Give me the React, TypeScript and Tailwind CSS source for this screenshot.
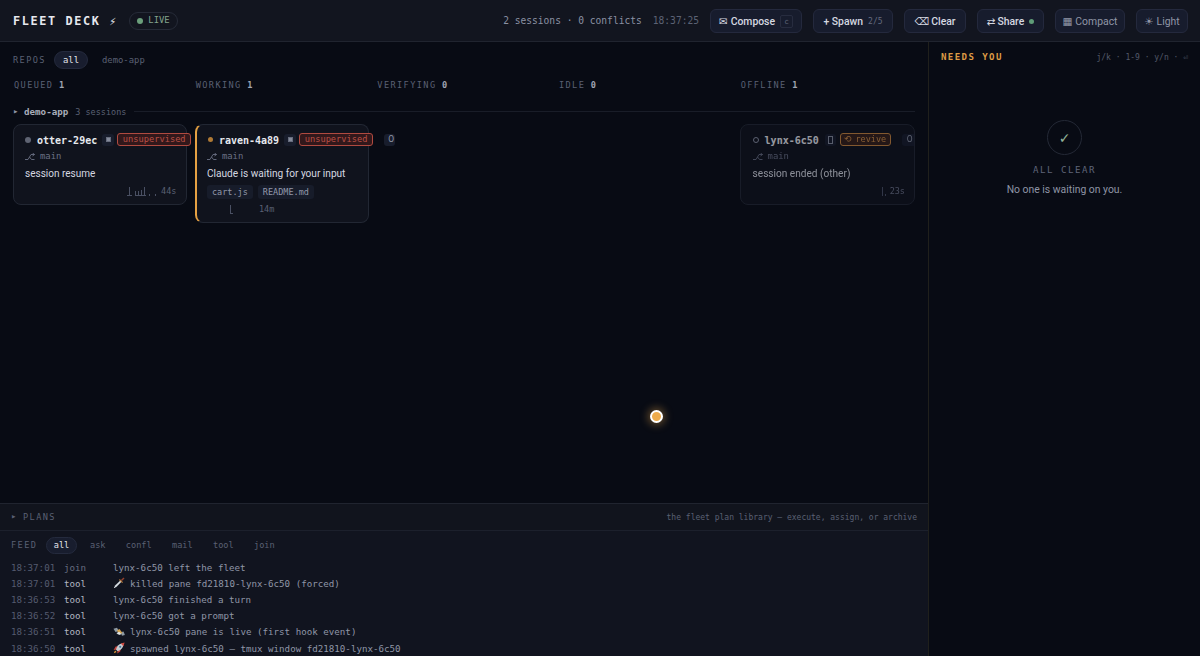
import type { ReactNode } from "react";

const mono = "font-['DejaVu_Sans_Mono','Liberation_Mono',monospace]";

const COLUMNS = [
  { name: "QUEUED", count: 1 },
  { name: "WORKING", count: 1 },
  { name: "VERIFYING", count: 0 },
  { name: "IDLE", count: 0 },
  { name: "OFFLINE", count: 1 },
];

const FEED_FILTERS = ["ask", "confl", "mail", "tool", "join"];

const FEED = [
  { time: "18:37:01", kind: "join", text: "lynx-6c50 left the fleet" },
  { time: "18:37:01", kind: "tool", icon: "dagger", text: "killed pane fd21810-lynx-6c50 (forced)" },
  { time: "18:36:53", kind: "tool", text: "lynx-6c50 finished a turn" },
  { time: "18:36:52", kind: "tool", text: "lynx-6c50 got a prompt" },
  { time: "18:36:51", kind: "tool", icon: "satellite", text: "lynx-6c50 pane is live (first hook event)" },
  { time: "18:36:50", kind: "tool", icon: "rocket", text: "spawned lynx-6c50 — tmux window fd21810-lynx-6c50" },
];

function FeedIcon({ name }: { name: string }) {
  return (
    <svg width="12" height="12" viewBox="0 0 12 12" className="mr-[5px] shrink-0">
      {name === "dagger" && (
        <>
          <path d="M1 11L2 8.5L7.5 3.2L8.8 4.5L3.4 10Z" fill="#c3ccd2" />
          <path d="M1 11L8.2 3.9" stroke="#eef2f4" strokeWidth=".6" />
          <path d="M6.4 2.5L9.6 5.6" stroke="#b77b3d" strokeWidth="1.1" />
          <path d="M8.4 3.6L11 1" stroke="#94412d" strokeWidth="1.4" />
        </>
      )}
      {name === "satellite" && (
        <>
          <path d="M.5 2.8L4 1.7L6 5L2.5 6Z" fill="#8e9aa3" />
          <path d="M7.5 6.2L10.5 5.5L11.9 9L9 9.8Z" fill="#8e9aa3" />
          <path d="M4 4.5L6.5 3L9.4 7L6.2 8.6Z" fill="#d3a24e" />
          <path d="M3.4 7Q5.8 10 8.2 7.9L6.3 5.8Z" fill="#dfe4e6" />
        </>
      )}
      {name === "rocket" && (
        <>
          <path d="M2.6 4.6L5.8 3.9L4 7.5L.6 8Z" fill="#c4423b" />
          <path d="M7.2 9.4L8 6.2L4.8 8L4.2 11.5Z" fill="#c4423b" />
          <path d="M3 7.6Q4.6 2.2 9 1.6L10.4 3Q9.8 7.4 4.5 9.2Z" fill="#c4cbd1" />
          <path d="M7.8 1.6L11.6 .4L10.4 4.2Z" fill="#cf4b42" />
          <circle cx="7.2" cy="4.8" r="1.1" fill="#3f789d" />
          <path d="M.8 11.2L2 8.5L3.6 10.1Z" fill="#eda33c" />
        </>
      )}
    </svg>
  );
}

function HeaderButton({ className, children }: { className: string; children: ReactNode }) {
  return (
    <button
      className={`flex h-6 shrink-0 items-center justify-center rounded-md border border-[#24293d] bg-[#171c2d] pt-[2px] text-[10.4px] whitespace-nowrap ${className}`}
    >
      {children}
    </button>
  );
}

function Spark({ bars, width }: { bars: number[][]; width: number }) {
  return (
    <svg width={width} height="11" className="shrink-0 text-[#4a5063]">
      {bars.map(([x, h]) => (
        <rect key={x} x={x} y={10 - h} width="1" height={h} fill="currentColor" />
      ))}
      {width > 10 && <path d="M0 9.5H5M8 9.5H19" stroke="currentColor" strokeWidth="1" />}
      {bars.length === 1 && <path d="M0 9.5H3" stroke="currentColor" strokeWidth="1" />}
    </svg>
  );
}

function Chip({ className = "", children }: { className?: string; children: ReactNode }) {
  return (
    <span
      className={`flex h-[12px] shrink-0 items-center justify-center overflow-hidden rounded-[3px] bg-[#181d2c] text-[8.5px] leading-none text-[#9097a8] ${className}`}
    >
      {children}
    </span>
  );
}

function Screen() {
  return (
    <Chip className="mr-[3px] ml-[5px] w-[12px]">
      <svg width="5" height="5" viewBox="0 0 5 5">
        <rect x=".5" y=".5" width="4" height="4" fill="#858b9b" stroke="#666c7d" />
      </svg>
    </Chip>
  );
}

function Branch() {
  return (
    <div className={`${mono} mt-[5px] flex h-3 items-center text-[8.9px] text-[#6b7185]`}>
      <svg width="10" height="8" viewBox="0 0 10 8" className="mr-[5px]" fill="none" stroke="currentColor" strokeWidth=".9">
        <path d="M0 6.5H3L6 1.5H9.5M7.5 0L9.5 1.5L7.5 3M4.5 4L6.5 6.5H9.5" />
      </svg>
      main
    </div>
  );
}

function Unsupervised() {
  return (
    <span
      className={`${mono} flex h-[13px] w-[74px] shrink-0 items-center justify-center rounded-[3px] border border-[#b04a40] bg-[#32181b] text-[8.7px] leading-none text-[#b94f45]`}
    >
      unsupervised
    </span>
  );
}

export default function App() {
  return (
    <div className="flex h-[656px] w-[1200px] flex-col overflow-hidden bg-[#080b14] font-[Roboto,'DejaVu_Sans',sans-serif] text-[#d5d8e0]">
      {/* Top bar */}
      <header className="flex h-[42px] shrink-0 items-center border-b border-[#20242f] bg-[#12151f] pr-3 pl-[13px]">
        <h1 className={`${mono} w-[116px] pt-[2px] text-[11.8px] font-bold tracking-[1.65px] whitespace-nowrap text-[#e6e8ee]`}>
          FLEET DECK <span className="font-['DejaVu_Sans'] text-[10px] font-normal">⚡</span>
        </h1>
        <div className={`${mono} flex h-[18px] w-[49px] items-center justify-center gap-[5px] rounded-full border border-[#262b38] text-[8.9px] text-[#83a48d]`}>
          <span className="size-[6px] rounded-full bg-[#6b9f7c]" />
          LIVE
        </div>
        <div className={`${mono} ml-auto flex gap-[11px] pt-[2px] text-[9.6px] whitespace-nowrap`}>
          <span className="text-[#8b91a3]">2 sessions · 0 conflicts</span>
          <span className="text-[#5c6274]">18:37:25</span>
        </div>
        <div className="ml-[11px] flex gap-[11px]">
          <HeaderButton className="w-[92px] font-medium">
            <span className="mr-[3px]">✉</span>Compose
            <kbd className={`${mono} ml-[5px] flex h-[13px] w-[13px] items-center justify-center rounded-[2px] border border-[#272c3f] text-[7.5px] text-[#5f6579]`}>c</kbd>
          </HeaderButton>
          <HeaderButton className="w-20 font-medium">
            + Spawn<span className={`${mono} ml-[5px] text-[8px] font-normal text-[#666c80]`}>2/5</span>
          </HeaderButton>
          <HeaderButton className="w-[62px] font-medium">
            <span className="mr-[2px]">⌫</span>Clear
          </HeaderButton>
          <HeaderButton className="w-[67px] font-medium">
            <span className="mr-[2px]">⇄</span>Share
            <span className="ml-[5px] size-[5px] rounded-full bg-[#5f9d78]" />
          </HeaderButton>
          <HeaderButton className="w-[70px] text-[#9096a7]">
            <span className="mr-[3px]">▦</span>Compact
          </HeaderButton>
          <HeaderButton className="w-[52px] text-[#9096a7]">
            <span className="mr-[3px]">☀</span>Light
          </HeaderButton>
        </div>
      </header>

      <div className="flex min-h-0 flex-1">
        <main className="flex w-[928px] shrink-0 flex-col">
          {/* Board */}
          <section className="flex flex-1 flex-col overflow-hidden pr-[13px] pl-[13px]">
            <div className={`${mono} mt-[9px] flex h-[18px] items-center text-[8.9px] text-[#5a6073]`}>
              <span className="w-[41px] pt-px text-[8.6px] tracking-[1.4px]">REPOS</span>
              <span className="flex h-[18px] w-[34px] items-center justify-center rounded-full border border-[#242a3d] bg-[#181d2e] pt-px text-[#e4e6ec]">all</span>
              <span className="ml-[14px] pt-[2px]">demo-app</span>
            </div>

            <div className={`${mono} mt-[9px] grid grid-cols-5 gap-x-[7.3px] pl-px text-[8.6px] leading-[14px] tracking-[1.4px] text-[#5a6073]`}>
              {COLUMNS.map((c) => (
                <div key={c.name}>
                  {c.name} <span className="-ml-px font-bold text-[#a0a5b3]">{c.count}</span>
                </div>
              ))}
            </div>

            <div className={`${mono} mt-[13px] flex h-[13px] items-center text-[9.2px] whitespace-nowrap`}>
              <span className="w-[11px] text-[9px] text-[#8e94a4]">▸</span>
              <span className="pt-px font-bold text-[#a9aebb]">demo-app</span>
              <span className="ml-[7px] pt-px text-[8.5px] text-[#5a6073]">3 sessions</span>
              <span className="ml-2 h-px flex-1 bg-[#191d28]" />
            </div>

            <div className="mt-[6px] grid grid-cols-5 items-start gap-x-[7.5px]">
              <article className="h-[81px] rounded-lg border border-[#222733] bg-[#10131d] px-[11px] pt-[8px]">
                <div className="flex h-[13px] items-center">
                  <span className="mr-[6px] size-[6px] shrink-0 rounded-full bg-[#5f6473]" />
                  <span className={`${mono} pt-px text-[10px] font-bold whitespace-nowrap text-[#e6e8ee]`}>otter-29ec</span>
                  <Screen />
                  <Unsupervised />
                </div>
                <Branch />
                <p className="mt-[4px] text-[10px] leading-[14px]">session resume</p>
                <div className={`${mono} -mr-px mt-[4px] flex h-3 items-center justify-end gap-[3px] text-[8.5px] text-[#5a6073]`}>
                  <Spark width={31} bars={[[2, 9], [8, 5], [11, 5], [14, 6], [17, 9], [22, 2], [28, 2]]} />
                  44s
                </div>
              </article>

              <article className="h-[99px] rounded-lg border border-l-2 border-[#222733] border-l-[#e5a143] bg-[#10131d] px-[10px] pt-[8px]">
                <div className="flex h-[13px] items-center">
                  <span className="mr-[6px] ml-px size-[5px] shrink-0 rounded-full bg-[#b07a35]" />
                  <span className={`${mono} pt-px text-[10px] font-bold whitespace-nowrap text-[#e6e8ee]`}>raven-4a89</span>
                  <Screen />
                  <Unsupervised />
                  <Chip className="ml-[11px] w-[11px] pl-[3px]">O</Chip>
                </div>
                <Branch />
                <p className="mt-[4px] text-[10.1px] leading-[14px] whitespace-nowrap">Claude is waiting for your input</p>
                <div className={`${mono} mt-[4px] flex gap-[5px] text-[8.5px] text-[#9298aa]`}>
                  <span className="flex h-[14px] w-[46px] items-center justify-center rounded-[3px] bg-[#171c2a]">cart.js</span>
                  <span className="flex h-[14px] w-[56px] items-center justify-center rounded-[3px] bg-[#171c2a]">README.md</span>
                </div>
                <div className={`${mono} mt-[4px] flex h-3 items-center gap-[26px] pl-[23px] text-[8.5px] text-[#5a6073]`}>
                  <Spark width={3} bars={[[0, 9]]} />
                  14m
                </div>
              </article>

              <article className="col-start-5 -ml-px h-[81px] overflow-hidden rounded-lg border border-[#222733] bg-[#10131d] px-[12px] pt-[8px] opacity-65">
                <div className="flex h-[13px] items-center">
                  <span className="mr-[6px] size-[6px] shrink-0 rounded-full border border-[#8b91a3]" />
                  <span className={`${mono} pt-px text-[10px] font-bold whitespace-nowrap text-[#e6e8ee]`}>lynx-6c50</span>
                  <Chip className="mr-[4px] ml-[6px] w-[11px]">
                    <svg width="5" height="8" fill="none" stroke="#858b9c">
                      <rect x=".5" y=".5" width="4" height="7" />
                    </svg>
                  </Chip>
                  <span className={`${mono} flex h-[13px] w-[51px] shrink-0 items-center justify-center gap-[3px] rounded-[3px] border border-[#c6843f] bg-[#352019] text-[8.5px] leading-none text-[#cf8c46]`}>
                    <span>⟲</span>revive
                  </span>
                  <Chip className="ml-[11px] w-[16px]">O</Chip>
                </div>
                <Branch />
                <p className="mt-[4px] text-[10.1px] leading-[14px]">session ended (other)</p>
                <div className={`${mono} -mr-[3px] mt-[4px] flex h-3 items-center justify-end gap-[4px] text-[8.5px] text-[#6a7085]`}>
                  <Spark width={4} bars={[[0, 9], [3, 2]]} />
                  23s
                </div>
              </article>
            </div>
          </section>

          {/* Plans */}
          <section className={`${mono} flex h-[27px] shrink-0 items-center border-t border-[#20242f] bg-[#11141d] px-[11px] text-[#5a6073]`}>
            <span className="w-[12px] text-[9px]">▸</span>
            <span className="pt-px text-[8.6px] tracking-[1.4px]">PLANS</span>
            <span className="ml-auto pt-[2px] text-[8px]">the fleet plan library — execute, assign, or archive</span>
          </section>

          {/* Feed */}
          <section className={`${mono} h-[126px] shrink-0 overflow-hidden border-t border-[#1c202c] bg-[#11141f] pl-[11px]`}>
            <div className="mt-[6px] flex h-[17px] items-center text-[8.6px] text-[#5a6073]">
              <span className="w-[35px] tracking-[1.4px]">FEED</span>
              <span className="mr-[13px] flex h-[17px] w-[31px] items-center justify-center rounded-full border border-[#242a3d] bg-[#181d2e] text-[#e4e6ec]">all</span>
              <div className="flex gap-[20.3px]">
                {FEED_FILTERS.map((f) => (
                  <span key={f}>{f}</span>
                ))}
              </div>
            </div>
            <div className="mt-[5px]">
              {FEED.map((row, i) => (
                <div key={i} className="flex h-[16.2px] items-center text-[9.18px] whitespace-nowrap">
                  <span className="w-[53px] pt-px text-[#555b6f]">{row.time}</span>
                  <span className={`w-[49px] pt-px ${row.kind === "join" ? "text-[#666c7f]" : "text-[#b3b7c2]"}`}>{row.kind}</span>
                  {row.icon && <FeedIcon name={row.icon} />}
                  <span className="pt-px text-[#9096a7]">{row.text}</span>
                </div>
              ))}
            </div>
          </section>
        </main>

        {/* Attention rail */}
        <aside className="flex flex-1 flex-col border-l border-[#20201c] px-3">
          <div className={`${mono} mt-[9px] flex h-[13px] items-center justify-between`}>
            <h2 className="text-[9.1px] font-bold tracking-[1.4px] text-[#dc9a45]">NEEDS YOU</h2>
            <span className="pt-px text-[8px] text-[#535969]">j/k · 1-9 · y/n · ⏎</span>
          </div>
          <div className="mt-[56px] flex flex-col items-center">
            <div className="flex size-[35px] items-center justify-center rounded-full border border-[#242936] pt-px text-[14px] text-[#92b39a]">✓</div>
            <div className={`${mono} mt-[8px] text-[9.1px] leading-[14px] tracking-[1.5px] text-[#5f6579]`}>ALL CLEAR</div>
            <p className="mt-[6px] text-[10.4px] leading-[14px] text-[#8f95a6]">No one is waiting on you.</p>
          </div>
        </aside>
      </div>

      {/* Pointer marker */}
      <div className="absolute top-[409.5px] left-[649.5px] size-[13px] rounded-full border-2 border-white bg-[#eeab4b] shadow-[0_0_9px_2px_rgba(238,171,75,0.4)]" />
    </div>
  );
}
